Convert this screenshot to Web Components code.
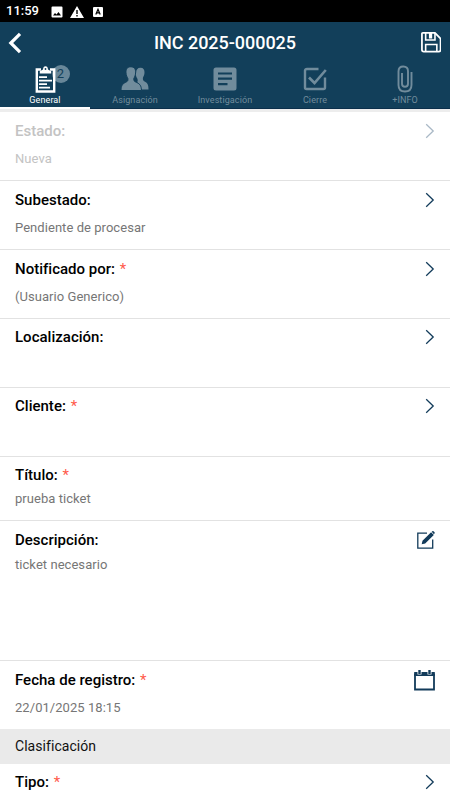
<!DOCTYPE html>
<html lang="es">
<head>
<meta charset="utf-8">
<title>INC 2025-000025</title>
<style>
html,body{margin:0;height:100%;overflow:hidden;background:#fff}
body{font-family:Roboto,"Liberation Sans",sans-serif}
</style>
</head>
<body>
<incident-page></incident-page>
<script>
const define = (name, html, setup) => {
  const t = document.createElement('template');
  t.innerHTML = html;
  customElements.define(name, class extends HTMLElement {
    connectedCallback() {
      if (this.shadowRoot) return;
      this.attachShadow({mode: 'open'}).append(t.content.cloneNode(true));
      if (setup) setup(this, this.shadowRoot);
    }
  });
};

const icons = {
  back: [14, 22, '<path d="M12 1.800 2.800 11l9.200 9.200" fill="none" stroke="currentColor" stroke-width="3.200"/>'],
  save: [22, 22, '<path d="M2 1h13l6 6v12q0 2-2 2H3q-2 0-2-2V2q0-1 1-1Z" fill="none" stroke="currentColor" stroke-width="1.900"/><path d="M5 1v7.500h10V1M5 21v-7.500h12V21" fill="none" stroke="currentColor" stroke-width="1.700"/><path d="M8.500 1H12v6H8.500z" fill="currentColor"/>', 20.5, 20.5],
  picture: [12, 12, '<path fill="currentColor" fill-rule="evenodd" d="M1.500.500h9q1 0 1 1v9q0 1-1 1h-9q-1 0-1-1v-9q0-1 1-1ZM2 9.500h8L7.500 6 5.500 8.500 4 7Z"/>'],
  warning: [14, 12, '<path fill="currentColor" fill-rule="evenodd" d="M7 0l7 12H0ZM6.300 4v4h1.400V4ZM6.300 9v1.500h1.400V9Z"/>'],
  letter: [10, 12, '<path fill="currentColor" fill-rule="evenodd" d="M1 1h8q1 0 1 1v8q0 1-1 1H1q-1 0-1-1V2q0-1 1-1Z"/><path d="M2.800 8.500 5 3.200l2.200 5.300M3.600 6.900h2.800" fill="none" stroke="#000" stroke-width="1.200"/>'],
  clipboard: [21, 27, '<path d="M6 3.500H1.800v22h17.400v-22H15" fill="none" stroke="currentColor" stroke-width="2.400"/><path d="M4.800 7.500V5.200l3.200-1.600Q8.200.200 10.500.200t2.500 3.400l3.200 1.600v2.300Z" fill="currentColor"/><circle cx="10.500" cy="3" r=".9" fill="#123f5a"/><path d="M4 11.200h8M4 14.700h13M4 18.200h8M4 21.700h11" stroke="currentColor" stroke-width="1.800"/>'],
  people: [28, 24, '<path fill="currentColor" d="M19.500.800c3 0 4.200 2 4 5-.1 2.300-.9 3.600-1.500 4.700-.4 2.500 0 3 2 4.300 2.400 1.200 3.500 2.800 3.500 7.700h-7.300c-.2-4-1.700-6-4-7.300.8-1 .5-2.200.2-3.400C15 10 14.800 8 15 5.800c.2-3 1.500-5 4.500-5Z"/><path fill="currentColor" stroke="#123f5a" stroke-width="1" d="M9.800-.2c3.600 0 5 2.400 4.800 6.100-.2 2.400-.9 4.200-1.700 5.300-.4 2.500.1 3 2.600 4.200 3.500 1.600 4.800 3.300 5 8.100H0c.2-4.800 1.300-6.500 4.500-8.100 2.400-1.200 2.700-1.700 2.300-4.200C6 10.100 5.200 8.300 5 5.900 4.800 2.200 6.200-.2 9.800-.2Z"/>'],
  article: [24, 24, '<path fill="currentColor" fill-rule="evenodd" d="M3 .5h18Q23.500.500 23.500 3v18q0 2.500-2.500 2.500H3Q.500 23.500.500 21V3Q.500.500 3 .5ZM5 5.500v2h14v-2ZM5 10.500v2.300h14v-2.300ZM5 16v2.200h9.500V16Z"/>'],
  check: [24, 24, '<path d="M15.500 2H4Q2 2 2 3.500v17Q2 22 3.500 22h17q1.500 0 1.500-1.500v-10" fill="none" stroke="currentColor" stroke-width="2.400"/><path d="m6 10.500 5.500 5.500L22.800 3" fill="none" stroke="currentColor" stroke-width="2.600"/>'],
  clip: [16, 28, '<path d="M14.500 7v13q0 6.500-6.500 6.500T1.500 20V6.500q0-5 4.800-5t4.700 5v12.300q0 3-3 3t-3-3V8" fill="none" stroke="currentColor" stroke-width="1.900"/>'],
  chevron: [10, 16, '<path d="m1.200 1.300 7 6.700-7 6.700" fill="none" stroke="currentColor" stroke-width="1.300"/>'],
  edit: [18, 18, '<path d="M10 2.200H.800v15h14.900V8.500" fill="none" stroke="currentColor" stroke-width="1.300"/><path fill="currentColor" d="m4.700 13.300.8-3.500 8.600-8.500 2.700 2.700-8.600 8.500ZM14.700.800l.6-.5q.8-.5 1.800.4t.4 1.800l-.6.700Z"/>'],
  calendar: [21, 21, '<path d="M1 4.500h19v15H1Z" fill="none" stroke="currentColor" stroke-width="1.800"/><path d="M.200 2h20.600v4H.200Z" fill="currentColor"/><path d="M3.500.800h4v3.800h-4ZM13.500.800h4v3.800h-4Z" fill="#fff"/><path d="M5.500 0v4M15.500 0v4" stroke="currentColor" stroke-width="2.400"/>']
};
define('line-icon', '<style>:host{display:block;flex:none}svg{display:block}</style>', (el, root) => {
  const [w, h, body, sw = w, sh = h] = icons[el.getAttribute('name')];
  const box = document.createElement('div');
  box.innerHTML = `<svg width="${sw}" height="${sh}" viewBox="0 0 ${w} ${h}">${body}</svg>`;
  root.append(box);
});

define('status-bar', `<style>
:host{display:flex;height:22px;box-sizing:border-box;padding:0 0 0 6px;background:#000;color:#fff;align-items:center}
span{font-size:13px;line-height:22px;font-weight:500;width:45px}
line-icon{margin-top:1px}
line-icon+line-icon{margin-left:7px}line-icon:last-child{margin-left:9px}
</style><span>11:59</span><line-icon name="picture"></line-icon><line-icon name="warning"></line-icon><line-icon name="letter"></line-icon>`);

define('title-bar', `<style>
:host{display:grid;grid-template-columns:40px 1fr 40px;height:43px;box-sizing:border-box;padding-bottom:2px;align-items:center;color:#fff}
h1{margin:0;text-align:center;font-size:18px;line-height:22px;font-weight:500;letter-spacing:-.03px}
.back{padding-left:8px}.save{justify-self:end;padding-right:9px}
</style><line-icon class="back" name="back"></line-icon><h1><slot></slot></h1><line-icon class="save" name="save"></line-icon>`);

define('tab-item', `<style>
:host{display:flex;flex-direction:column;align-items:center;flex:1;height:44px;box-sizing:border-box;color:#718c9c;border-bottom:1px solid #0b2f4b}
:host([active]){color:#fff;border-bottom:2px solid #fff}
.icon{height:28px;display:flex;align-items:center;position:relative}
.label{font-size:9px;line-height:12px;margin-top:1px;letter-spacing:.1px}
.badge{position:absolute;left:17px;top:0;width:18px;height:18px;border-radius:50%;background:#688799;color:#123f5a;font-size:13px;line-height:18px;text-align:center}
</style><div class="icon"></div><div class="label"><slot></slot></div>`, (el, root) => {
  const box = root.querySelector('.icon');
  if (el.hasAttribute('badge')) {
    const b = document.createElement('span');
    b.className = 'badge';
    b.textContent = el.getAttribute('badge');
    box.append(b);
  }
  const icon = document.createElement('line-icon');
  icon.setAttribute('name', el.getAttribute('icon'));
  icon.style.position = 'relative';
  box.append(icon);
});

define('tab-strip', '<style>:host{display:flex}</style><slot></slot>');

define('field-row', `<style>
:host{display:flex;justify-content:space-between;box-sizing:border-box;height:69px;padding:9px 15px 0;border-bottom:1px solid #e2e2e2;background:#fff;color:#000}
:host([disabled]){color:#c3c3c3}
.label{font-size:15px;line-height:20px;font-weight:500;letter-spacing:.01px}
.label i{font-style:normal;font-weight:400;color:#ff5a4b;margin-left:1px}
.value{font-size:13px;line-height:18px;margin-top:var(--gap,9px);color:#767676;letter-spacing:.05px}
:host([disabled]) .value{color:#c3c3c3}
line-icon{color:#123b5a;margin-top:var(--icon-top,2px)}
:host([disabled]) line-icon{color:#a9b8c6}
</style><div><div class="label"></div><div class="value"><slot></slot></div></div>`, (el, root) => {
  const label = root.querySelector('.label');
  label.textContent = el.getAttribute('label');
  if (el.hasAttribute('required')) {
    const star = document.createElement('i');
    star.textContent = '*';
    label.append(' ', star);
  }
  if (el.hasAttribute('icon')) {
    const icon = document.createElement('line-icon');
    icon.setAttribute('name', el.getAttribute('icon'));
    root.append(icon);
  }
});

define('section-heading', `<style>
:host{display:block;height:35px;line-height:35px;box-sizing:border-box;padding-left:15px;background:#eaeaea;color:#111;font-size:14px;letter-spacing:.05px}
</style><slot></slot>`);

define('incident-page', `<style>
:host{display:flex;flex-direction:column;height:800px;overflow:hidden}
:host>*{flex:none}
header{background:#123f5a}
.edge{height:3px;background:#ededed}
.high{padding-top:8px}
.title{height:64px;--gap:5px}
.description{height:140px;--gap:6px;--icon-top:1px}
.date{height:68px;border-bottom:0;--icon-top:0px}
</style>
<status-bar></status-bar>
<header>
<title-bar>INC 2025-000025</title-bar>
<tab-strip>
<tab-item icon="clipboard" badge="2" active>General</tab-item>
<tab-item icon="people">Asignación</tab-item>
<tab-item icon="article">Investigación</tab-item>
<tab-item icon="check">Cierre</tab-item>
<tab-item icon="clip">+INFO</tab-item>
</tab-strip>
</header>
<div class="edge"></div>
<field-row label="Estado:" icon="chevron" disabled>Nueva</field-row>
<field-row label="Subestado:" icon="chevron">Pendiente de procesar</field-row>
<field-row label="Notificado por:" icon="chevron" required>(Usuario Generico)</field-row>
<field-row class="high" label="Localización:" icon="chevron"></field-row>
<field-row class="high" label="Cliente:" icon="chevron" required></field-row>
<field-row class="title high" label="Título:" required>prueba ticket</field-row>
<field-row class="description" label="Descripción:" icon="edit">ticket necesario</field-row>
<field-row class="date" label="Fecha de registro:" icon="calendar" required>22/01/2025 18:15</field-row>
<section-heading>Clasificación</section-heading>
<field-row class="high" label="Tipo:" icon="chevron" required></field-row>`);
</script>
</body>
</html>
